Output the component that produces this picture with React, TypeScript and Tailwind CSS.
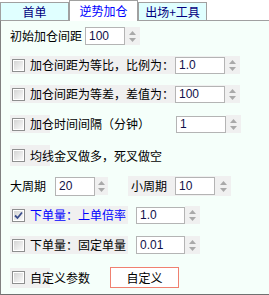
import React from "react";

const font = { fontFamily: '"Noto Sans CJK SC", "Noto Sans", sans-serif' };

const CheckBox = ({ checked = false }: { checked?: boolean }) => (
  <div className="w-[13px] h-[13px] border border-[#8e8f8f] bg-white p-px shrink-0">
    <div className="w-full h-full bg-gradient-to-br from-[#d4d4d4] to-[#fafafa] flex items-center justify-center">
      {checked && (
        <svg width="9" height="9" viewBox="0 0 9 9">
          <path d="M1 4.5 L3.5 7 L8 1.5" fill="none" stroke="#3b4d8c" strokeWidth="1.8" />
        </svg>
      )}
    </div>
  </div>
);

const Spinner = ({ w }: { w: string }) => (
  <div className={`${w} h-[18px] bg-[#f0f0f0] flex flex-col items-center justify-center gap-[3px]`}>
    <svg width="7" height="4" viewBox="0 0 7 4">
      <path d="M0 4 L3.5 0 L7 4 Z" fill="#a9a9a9" />
    </svg>
    <svg width="7" height="4" viewBox="0 0 7 4">
      <path d="M0 0 L3.5 4 L7 0 Z" fill="#a9a9a9" />
    </svg>
  </div>
);

const NumBox = ({ value, w, h = "h-[17px]" }: { value: string; w: string; h?: string }) => (
  <div
    className={`${w} ${h} border border-[#b4b4b4] bg-white flex items-center pl-[3px] text-[12px] text-[#10104a]`}
    style={{ fontFamily: '"Liberation Sans", sans-serif' }}
  >
    {value}
  </div>
);

export default function App() {
  return (
    <div className="w-[269px] h-[295px] bg-white text-[12px] text-black overflow-hidden" style={font}>
      {/* tabs */}
      <div className="flex items-end h-[20px]">
        <div className="w-[69px] h-[18px] bg-[#e0ffff] border border-b-0 border-[#a0a0a0] flex items-center justify-center text-[#000080]">
          首单
        </div>
        <div className="relative z-10 w-[69px] h-[21px] -mb-px bg-white border border-b-0 border-[#a0a0a0] flex items-center justify-center text-[#0000ff]">
          逆势加仓
        </div>
        <div className="w-[69px] h-[18px] bg-[#e0ffff] border border-b-0 border-[#a0a0a0] flex items-center justify-center text-[#000080]">
          出场+工具
        </div>
      </div>

      {/* panel */}
      <div className="h-[275px] bg-[#f5fffa] border-t border-l border-b border-t-[#a0a0a0] border-l-[#808080] border-b-[#707070] pt-[5px] flex flex-col">
        {/* row 1 */}
        <div className="h-[20px] flex items-center pl-[9px]">
          <span className="w-[75px]">初始加仓间距</span>
          <NumBox value="100" w="w-[40px]" h="h-[18px]" />
          <Spinner w="w-[15px]" />
        </div>

        {/* row 2 */}
        <div className="h-[20px] mt-[9px] flex items-center pl-[9px]">
          <div className="w-[230px] h-[18px] bg-[#f0f0f0] flex items-center pl-[2px]">
            <CheckBox />
            <span className="w-[150px] pl-[5px] whitespace-nowrap">加仓间距为等比，比例为：</span>
            <NumBox value="1.0" w="w-[50px]" />
            <Spinner w="w-[15px]" />
          </div>
        </div>

        {/* row 3 */}
        <div className="h-[20px] mt-[9px] flex items-center pl-[9px]">
          <div className="w-[230px] h-[18px] bg-[#f0f0f0] flex items-center pl-[2px]">
            <CheckBox />
            <span className="w-[150px] pl-[5px] whitespace-nowrap">加仓间距为等差，差值为：</span>
            <NumBox value="100" w="w-[50px]" />
            <Spinner w="w-[15px]" />
          </div>
        </div>

        {/* row 4 */}
        <div className="h-[20px] mt-[10px] flex items-center pl-[9px]">
          <div className="w-[166px] h-[18px] bg-[linear-gradient(to_right,#f0f0f0_40px,transparent_40px)] flex items-center pl-[2px]">
            <CheckBox />
            <span className="pl-[5px] whitespace-nowrap">加仓时间间隔（分钟）</span>
          </div>
          <NumBox value="1" w="w-[50px]" />
          <Spinner w="w-[15px]" />
        </div>

        {/* row 5 */}
        <div className="h-[21px] mt-[11px] flex items-center pl-[9px] bg-[linear-gradient(to_right,transparent_9px,#f0f0f0_9px,#f0f0f0_49px,transparent_49px)]">
          <div className="pl-[2px] flex items-center">
            <CheckBox />
            <span className="pl-[5px] whitespace-nowrap">均线金叉做多，死叉做空</span>
          </div>
        </div>

        {/* row 6 */}
        <div className="h-[20px] mt-[10px] flex items-center pl-[9px]">
          <span className="w-[45px]">大周期</span>
          <NumBox value="20" w="w-[40px]" h="h-[19px]" />
          <Spinner w="w-[13px]" />
          <div className="ml-[20px] w-[103px] h-[20px] bg-[#f0f0f0] flex items-center">
            <span className="w-[47px] pl-[3px]">小周期</span>
            <NumBox value="10" w="w-[40px]" h="h-[18px]" />
            <Spinner w="w-[16px]" />
          </div>
        </div>

        {/* row 7 */}
        <div className="h-[20px] mt-[9px] flex items-center pl-[9px]">
          <div className="w-[118px] h-[18px] bg-[#f0f0f0] flex items-center pl-[2px]">
            <CheckBox checked />
            <span className="pl-[5px] text-[#0000ff] whitespace-nowrap">下单量：上单倍率</span>
          </div>
          <div className="ml-[8px] flex items-center">
            <NumBox value="1.0" w="w-[49px]" />
            <Spinner w="w-[15px]" />
          </div>
        </div>

        {/* row 8 */}
        <div className="h-[20px] mt-[10px] flex items-center pl-[9px]">
          <div className="w-[118px] h-[18px] bg-[#f0f0f0] flex items-center pl-[2px]">
            <CheckBox />
            <span className="pl-[5px] whitespace-nowrap">下单量：固定单量</span>
          </div>
          <div className="ml-[8px] flex items-center">
            <NumBox value="0.01" w="w-[49px]" h="h-[18px]" />
            <Spinner w="w-[15px]" />
          </div>
        </div>

        {/* row 9 */}
        <div className="h-[21px] mt-[12px] flex items-center pl-[9px]">
          <div className="w-[100px] h-[20px] bg-[linear-gradient(to_right,#f0f0f0_40px,transparent_40px)] flex items-center pl-[2px]">
            <CheckBox />
            <span className="pl-[5px]">自定义参数</span>
          </div>
          <button className="w-[69px] h-[21px] bg-white border border-[#f08070] flex items-center justify-center">
            自定义
          </button>
        </div>
      </div>
    </div>
  );
}
